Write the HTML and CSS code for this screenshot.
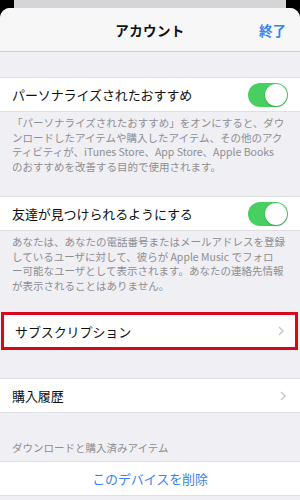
FILE: index.html
```html
<!DOCTYPE html>
<html lang="ja">
<head>
<meta charset="utf-8">
<link rel="stylesheet" href="styles.css">
</head>
<body>
<div class="backcard"></div>
<div class="sheet">
  <header class="navbar">
    <span class="nav-title">アカウント</span>
    <span class="nav-done">終了</span>
  </header>

  <div class="gap gap-top"></div>
  <div class="row">
    <span class="label">パーソナライズされたおすすめ</span>
    <span class="toggle"></span>
  </div>
  <p class="note note-1">「パーソナライズされたおすすめ」をオンにすると、ダウ<br>ンロードしたアイテムや購入したアイテム、その他のアク<br>ティビティが、iTunes Store、App Store、Apple Books<br>のおすすめを改善する目的で使用されます。</p>

  <div class="row">
    <span class="label">友達が見つけられるようにする</span>
    <span class="toggle"></span>
  </div>
  <p class="note note-2">あなたは、あなたの電話番号またはメールアドレスを登録<br>しているユーザに対して、彼らが Apple Music でフォロ<br>ー可能なユーザとして表示されます。あなたの連絡先情報<br>が表示されることはありません。</p>

  <div class="row row-highlight">
    <span class="label">サブスクリプション</span>
    <svg class="chevron" width="6" height="10" viewBox="0 0 6 10"><polyline points="1,1 5,5 1,9" fill="none" stroke="#c4c4c8" stroke-width="1.3"/></svg>
  </div>

  <div class="gap gap-mid"></div>
  <div class="row">
    <span class="label">購入履歴</span>
    <svg class="chevron" width="6" height="10" viewBox="0 0 6 10"><polyline points="1,1 5,5 1,9" fill="none" stroke="#c4c4c8" stroke-width="1.3"/></svg>
  </div>

  <div class="section-head">ダウンロードと購入済みアイテム</div>
  <div class="row row-center">
    <span class="label link">このデバイスを削除</span>
  </div>
  <div class="gap gap-end"></div>
</div>
</body>
</html>
```

FILE: styles.css
```css
* { box-sizing: border-box; }
html, body {
  margin: 0;
  padding: 0;
  background: #000;
  font-family: "Noto Sans CJK JP", "Noto Sans", sans-serif;
  width: 300px;
  height: 500px;
  overflow: hidden;
}
.backcard {
  height: 8px;
  margin: 0 14px;
  background: #d5d5d7;
}
.sheet {
  background: #efeff4;
  border-radius: 10px 10px 0 0;
  overflow: hidden;
  height: 492px;
}
.navbar {
  height: 44px;
  background: #f7f7f8;
  border-bottom: 1px solid #cfcfd4;
  display: flex;
  align-items: center;
  justify-content: center;
  position: relative;
}
.nav-title {
  font-size: 13.5px;
  font-weight: 700;
  color: #111;
  letter-spacing: 0.4px;
}
.nav-done {
  position: absolute;
  right: 14px;
  top: 12px;
  font-size: 13.5px;
  font-weight: 700;
  color: #3a82f6;
}
.gap-top { height: 25px; }
.gap-mid { height: 28px; }
.gap-end { height: 10px; }
.row {
  height: 35px;
  background: #fff;
  border-top: 1px solid #e0e0e4;
  border-bottom: 1px solid #e0e0e4;
  display: flex;
  align-items: center;
  justify-content: space-between;
  padding: 0 12px;
}
.label {
  font-size: 13px;
  color: #111;
  letter-spacing: -0.1px;
}
.toggle {
  width: 40px;
  height: 24px;
  border-radius: 12px;
  background: #47d05f;
  position: relative;
}
.toggle::after {
  content: "";
  position: absolute;
  right: 1px;
  top: 1px;
  width: 22px;
  height: 22px;
  border-radius: 50%;
  background: #fff;
  box-shadow: 0 1px 2px rgba(0,0,0,0.25);
}
.note {
  margin: 0;
  padding: 4px 12px 0 12px;
  font-size: 10.5px;
  line-height: 14.6px;
  color: #8e8e93;
  white-space: nowrap;
}
.note-1 { height: 84px; }
.note-2 { height: 81px; }
.row-highlight {
  border: 3px solid #d8071c;
  margin: 0 2px 0 1px;
  height: 38px;
  padding: 0 9px 0 11px;
}
.chevron { display: block; margin-right: 2px; }
.section-head {
  padding: 27px 12px 0 12px;
  height: 48px;
  font-size: 10.5px;
  color: #8e8e93;
}
.row-center { justify-content: center; }
.link { color: #3a82f6; }
```
